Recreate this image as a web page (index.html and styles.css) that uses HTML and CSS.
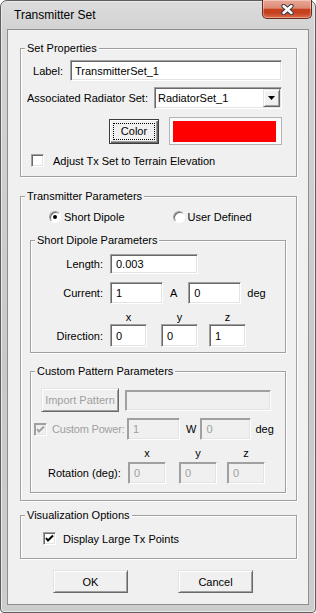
FILE: index.html
```html
<!DOCTYPE html>
<html lang="en">
<head>
<meta charset="UTF-8">
<meta name="viewport" content="width=device-width, initial-scale=1.0">
<title>Transmitter Set</title>
<link rel="stylesheet" href="styles.css">
</head>
<body>
	<div class="window">
		<div class="titlebar">
			<span class="title">Transmitter Set</span>
			<button class="close" type="button" aria-label="Close">
				<svg width="13" height="11" viewBox="0 0 13 11">
					<path d="M2.5 2 L10.5 9 M10.5 2 L2.5 9" stroke="#3a3d4c" stroke-width="4.4" stroke-linecap="round" fill="none"/>
					<path d="M2.5 2 L10.5 9 M10.5 2 L2.5 9" stroke="#fff" stroke-width="2.4" stroke-linecap="round" fill="none"/>
				</svg>
			</button>
		</div>

		<div class="client">
			<!-- Set properties -->
			<fieldset class="group outer set-props">
				<legend>Set Properties</legend>
				<div class="row row-label">
					<span>Label:</span>
					<input class="field field-label" type="text" value="TransmitterSet_1">
				</div>
				<div class="row row-radiator">
					<span>Associated Radiator Set:</span>
					<div class="combo">
						<span class="combo-text">RadiatorSet_1</span>
						<span class="combo-btn">
							<svg width="7" height="4" viewBox="0 0 7 4"><polygon points="0,0 7,0 3.5,4" fill="#000"/></svg>
						</span>
					</div>
				</div>
				<div class="row row-color">
					<button class="btn btn-color" type="button">Color</button>
					<div class="swatch"><div class="swatch-fill"></div></div>
				</div>
				<div class="row row-adjust">
					<span class="check"></span>
					<span>Adjust Tx Set to Terrain Elevation</span>
				</div>
			</fieldset>

			<!-- Transmitter parameters -->
			<fieldset class="group outer tx-params">
				<legend>Transmitter Parameters</legend>
				<div class="row row-radios">
					<label class="radio-opt"><span class="radio selected"></span>Short Dipole</label>
					<label class="radio-opt"><span class="radio"></span>User Defined</label>
				</div>

				<fieldset class="group inner dipole">
					<legend>Short Dipole Parameters</legend>
					<div class="row row-length">
						<span class="param-label">Length:</span>
						<input class="field field-length" type="text" value="0.003">
					</div>
					<div class="row row-current">
						<span class="param-label">Current:</span>
						<input class="field field-num" type="text" value="1">
						<span class="unit-a">A</span>
						<input class="field field-num field-phase" type="text" value="0">
						<span class="unit-deg">deg</span>
					</div>
					<div class="row row-axes">
						<span class="axes-pad"></span>
						<span class="axis">x</span>
						<span class="axis axis-y">y</span>
						<span class="axis axis-z">z</span>
					</div>
					<div class="row row-direction">
						<span class="param-label">Direction:</span>
						<input class="field field-dir" type="text" value="0">
						<input class="field field-dir axis-y" type="text" value="0">
						<input class="field field-dir axis-z" type="text" value="1">
					</div>
				</fieldset>

				<fieldset class="group inner custom">
					<legend>Custom Pattern Parameters</legend>
					<div class="row row-import">
						<button class="btn btn-import" type="button" disabled>Import Pattern</button>
						<input class="field field-pattern" type="text" disabled>
					</div>
					<div class="row row-power">
						<span class="check checked disabled">
							<svg width="11" height="11" viewBox="0 0 11 11"><polyline points="2,5 4,7.5 9,2.5" fill="none" stroke="#a0a0a0" stroke-width="2"/></svg>
						</span>
						<span class="power-label">Custom Power:</span>
						<input class="field field-num" type="text" value="1" disabled>
						<span class="unit-w">W</span>
						<input class="field field-power-phase" type="text" value="0" disabled>
						<span class="unit-deg2">deg</span>
					</div>
					<div class="row row-axes2">
						<span class="axes-pad2"></span>
						<span class="axis2">x</span>
						<span class="axis2 rot-y">y</span>
						<span class="axis2 rot-z">z</span>
					</div>
					<div class="row row-rotation">
						<span class="rot-label">Rotation (deg):</span>
						<input class="field field-rot" type="text" value="0" disabled>
						<input class="field field-rot rot-y" type="text" value="0" disabled>
						<input class="field field-rot rot-z" type="text" value="0" disabled>
					</div>
				</fieldset>
			</fieldset>

			<!-- Visualization -->
			<fieldset class="group outer vis">
				<legend>Visualization Options</legend>
				<div class="row row-vis">
					<span class="check checked">
						<svg width="11" height="11" viewBox="0 0 11 11"><polyline points="2,5 4,7.5 9,2.5" fill="none" stroke="#000" stroke-width="2"/></svg>
					</span>
					<span>Display Large Tx Points</span>
				</div>
			</fieldset>

			<div class="actions">
				<button class="btn btn-action" type="button">OK</button>
				<button class="btn btn-action" type="button">Cancel</button>
			</div>
		</div>
	</div>
</body>
</html>
```

FILE: styles.css
```css
* {
	box-sizing: border-box;
}

body {
	margin: 0;
	width: 316px;
	height: 613px;
	overflow: hidden;
	background-color: #fff;
	font-family: 'Liberation Sans', Arial, sans-serif;
	font-size: 11px;
	color: #000;
}

/* window frame */
.window {
	width: 316px;
	height: 613px;
	display: flex;
	flex-direction: column;
	padding: 0 6px 7px 6px;
	border: 1px solid #5e5e5e;
	border-radius: 7px 7px 4px 4px;
	background: linear-gradient(to bottom, #dcdcdc 0, #d3d3d3 28px, #c9c9c9 60%, #cdcdcd 100%);
	box-shadow: inset 0 0 0 1px #e9e9e9;
}

.titlebar {
	height: 28px;
	display: flex;
	align-items: flex-start;
}

.title {
	margin: 7px 0 0 7px;
	font-size: 12px;
	line-height: 14px;
}

.close {
	width: 50px;
	height: 19px;
	margin: -1px -3px 0 auto;
	padding: 0;
	display: flex;
	align-items: center;
	justify-content: center;
	border: 1px solid #6a2a1d;
	border-top: none;
	border-radius: 0 0 5px 5px;
	background: linear-gradient(to bottom, #e9a896 0%, #dd8b73 45%, #c8411f 52%, #c4401e 72%, #dc6f4d 100%);
	box-shadow: inset 0 0 0 1px rgba(255, 255, 255, 0.35);
}

.client {
	flex: 1;
	display: flex;
	flex-direction: column;
	padding-top: 12px;
	border: 1px solid #8e8e8e;
	background-color: #f0f0f0;
}

/* group boxes */
.group {
	margin: 0;
	padding: 0;
	min-width: 0;
	border: 1px solid #a0a0a0;
	box-shadow: inset 1px 1px 0 #fff, 1px 1px 0 #fff;
}

.group legend {
	margin-left: 4px;
	padding: 0 2px;
	line-height: 13px;
	background-color: #f0f0f0;
}

.outer {
	margin: 0 11px 0 12px;
}

.inner {
	margin: 0 10px 0 9px;
}

.row {
	display: flex;
	align-items: center;
	white-space: nowrap;
}

/* controls */
.field {
	height: 20px;
	margin: 0;
	padding: 0 0 0 5px;
	border: 1px solid;
	border-color: #a0a0a0 #fff #fff #a0a0a0;
	box-shadow: inset 1px 1px 0 #696969, inset -1px -1px 0 #e3e3e3;
	background-color: #fff;
	font-family: inherit;
	font-size: 11px;
	color: #000;
	outline: none;
}

.field:disabled {
	background-color: #f0f0f0;
	color: #a0a0a0;
	box-shadow: inset 1px 1px 0 #a0a0a0, inset -1px -1px 0 #e3e3e3;
}

.btn {
	margin: 0;
	padding: 0;
	border: 1px solid;
	border-color: #e3e3e3 #696969 #696969 #e3e3e3;
	box-shadow: inset 1px 1px 0 #fff, inset -1px -1px 0 #a0a0a0;
	background-color: #f0f0f0;
	font-family: inherit;
	font-size: 11px;
	color: #000;
}

.btn:disabled {
	color: #a0a0a0;
}

.check {
	width: 13px;
	height: 13px;
	flex-shrink: 0;
	display: flex;
	align-items: center;
	justify-content: center;
	border: 1px solid;
	border-color: #a0a0a0 #fff #fff #a0a0a0;
	box-shadow: inset 1px 1px 0 #696969, inset -1px -1px 0 #e3e3e3;
	background-color: #fff;
}

.check.disabled {
	background-color: #f0f0f0;
	box-shadow: inset 1px 1px 0 #a0a0a0, inset -1px -1px 0 #e3e3e3;
}

.radio {
	width: 12px;
	height: 12px;
	flex-shrink: 0;
	display: flex;
	align-items: center;
	justify-content: center;
	border: 1px solid;
	border-color: #a0a0a0 #fff #fff #a0a0a0;
	border-radius: 50%;
	box-shadow: inset 1px 1px 0 #696969;
	background-color: #fff;
}

.radio.selected::after {
	content: '';
	width: 4px;
	height: 4px;
	border-radius: 50%;
	background-color: #000;
}

/* set properties */
.set-props {
	padding-bottom: 9px;
}

.row-label {
	justify-content: flex-end;
	gap: 7px;
	margin: 5px 14px 0 0;
}

.field-label {
	width: 212px;
	height: 21px;
	padding-left: 4px;
}

.row-radiator {
	justify-content: flex-end;
	gap: 6px;
	margin: 6px 14px 0 0;
}

.combo {
	width: 128px;
	height: 22px;
	display: flex;
	align-items: center;
	padding: 0 1px 0 3px;
	border: 1px solid;
	border-color: #a0a0a0 #fff #fff #a0a0a0;
	box-shadow: inset 1px 1px 0 #696969, inset -1px -1px 0 #e3e3e3;
	background-color: #fff;
}

.combo-btn {
	width: 17px;
	height: 18px;
	margin-left: auto;
	display: flex;
	align-items: center;
	justify-content: center;
	border: 1px solid;
	border-color: #e3e3e3 #696969 #696969 #e3e3e3;
	box-shadow: inset 1px 1px 0 #fff, inset -1px -1px 0 #a0a0a0;
	background-color: #f0f0f0;
}

.row-color {
	justify-content: flex-end;
	gap: 10px;
	margin: 8px 14px 0 0;
	height: 28px;
}

.btn-color {
	width: 50px;
	height: 25px;
	border-color: #3c3c3c;
	box-shadow: inset 1px 1px 0 #fff, inset -1px -1px 0 #696969, inset -2px -2px 0 #a0a0a0;
	outline: 1px dotted #000;
	outline-offset: -5px;
}

.swatch {
	width: 113px;
	height: 28px;
	padding: 3px 5px 2px 3px;
	border: 1px solid #b4b4b4;
	background-color: #fafafa;
}

.swatch-fill {
	width: 100%;
	height: 100%;
	background-color: #ff0000;
}

.row-adjust {
	gap: 9px;
	margin: 9px 0 0 10px;
	height: 13px;
}

/* transmitter parameters */
.tx-params {
	margin-top: 13px;
	padding-bottom: 7px;
}

.row-radios {
	margin: 7px 0 0 28px;
	height: 13px;
}

.radio-opt {
	width: 127px;
	display: flex;
	align-items: center;
	gap: 3px;
}

.dipole {
	margin-top: 11px;
	padding-bottom: 5px;
}

.param-label {
	width: 72px;
	margin-right: 7px;
	text-align: right;
}

.row-length {
	margin-top: 7px;
	height: 20px;
}

.field-length {
	width: 88px;
}

.row-current {
	margin-top: 8px;
	height: 22px;
}

.field-num {
	width: 53px;
	height: 22px;
}

.unit-a {
	margin-left: 7px;
}

.field-phase {
	margin-left: 11px;
}

.unit-deg {
	margin-left: 6px;
}

.row-axes {
	margin-top: 6px;
	height: 13px;
}

.axes-pad {
	width: 79px;
}

.axis {
	width: 37px;
	text-align: center;
}

.axis-y {
	margin-left: 14px;
}

.axis-z {
	margin-left: 11px;
}

.row-direction {
	margin-top: 1px;
	height: 23px;
}

.field-dir {
	width: 37px;
	height: 23px;
}

/* custom pattern */
.custom {
	margin-top: 12px;
	padding-bottom: 8px;
}

.row-import {
	gap: 6px;
	margin: 10px 0 0 10px;
	height: 24px;
}

.btn-import {
	width: 78px;
	height: 24px;
}

.field-pattern {
	width: 146px;
	height: 21px;
}

.row-power {
	margin: 6px 0 0 3px;
	height: 22px;
}

.power-label {
	width: 75px;
	margin-left: 5px;
	letter-spacing: -0.2px;
	color: #a0a0a0;
}

.unit-w {
	margin-left: 6px;
}

.field-power-phase {
	width: 51px;
	height: 22px;
	margin-left: 4px;
}

.unit-deg2 {
	margin-left: 4px;
}

.row-axes2 {
	margin-top: 6px;
	height: 13px;
}

.axes-pad2 {
	width: 97px;
}

.axis2 {
	width: 38px;
	text-align: center;
}

.rot-y {
	margin-left: 13px;
}

.rot-z {
	margin-left: 10px;
}

.row-rotation {
	margin-top: 3px;
	height: 22px;
}

.rot-label {
	width: 80px;
	margin-left: 17px;
}

.field-rot {
	width: 38px;
	height: 22px;
}

/* visualization */
.vis {
	margin-top: 8px;
	padding-bottom: 13px;
}

.row-vis {
	gap: 7px;
	margin: 10px 0 0 22px;
	height: 13px;
}

.actions {
	display: flex;
	gap: 50px;
	margin: 11px 0 0 45px;
}

.btn-action {
	width: 75px;
	height: 23px;
}
```
